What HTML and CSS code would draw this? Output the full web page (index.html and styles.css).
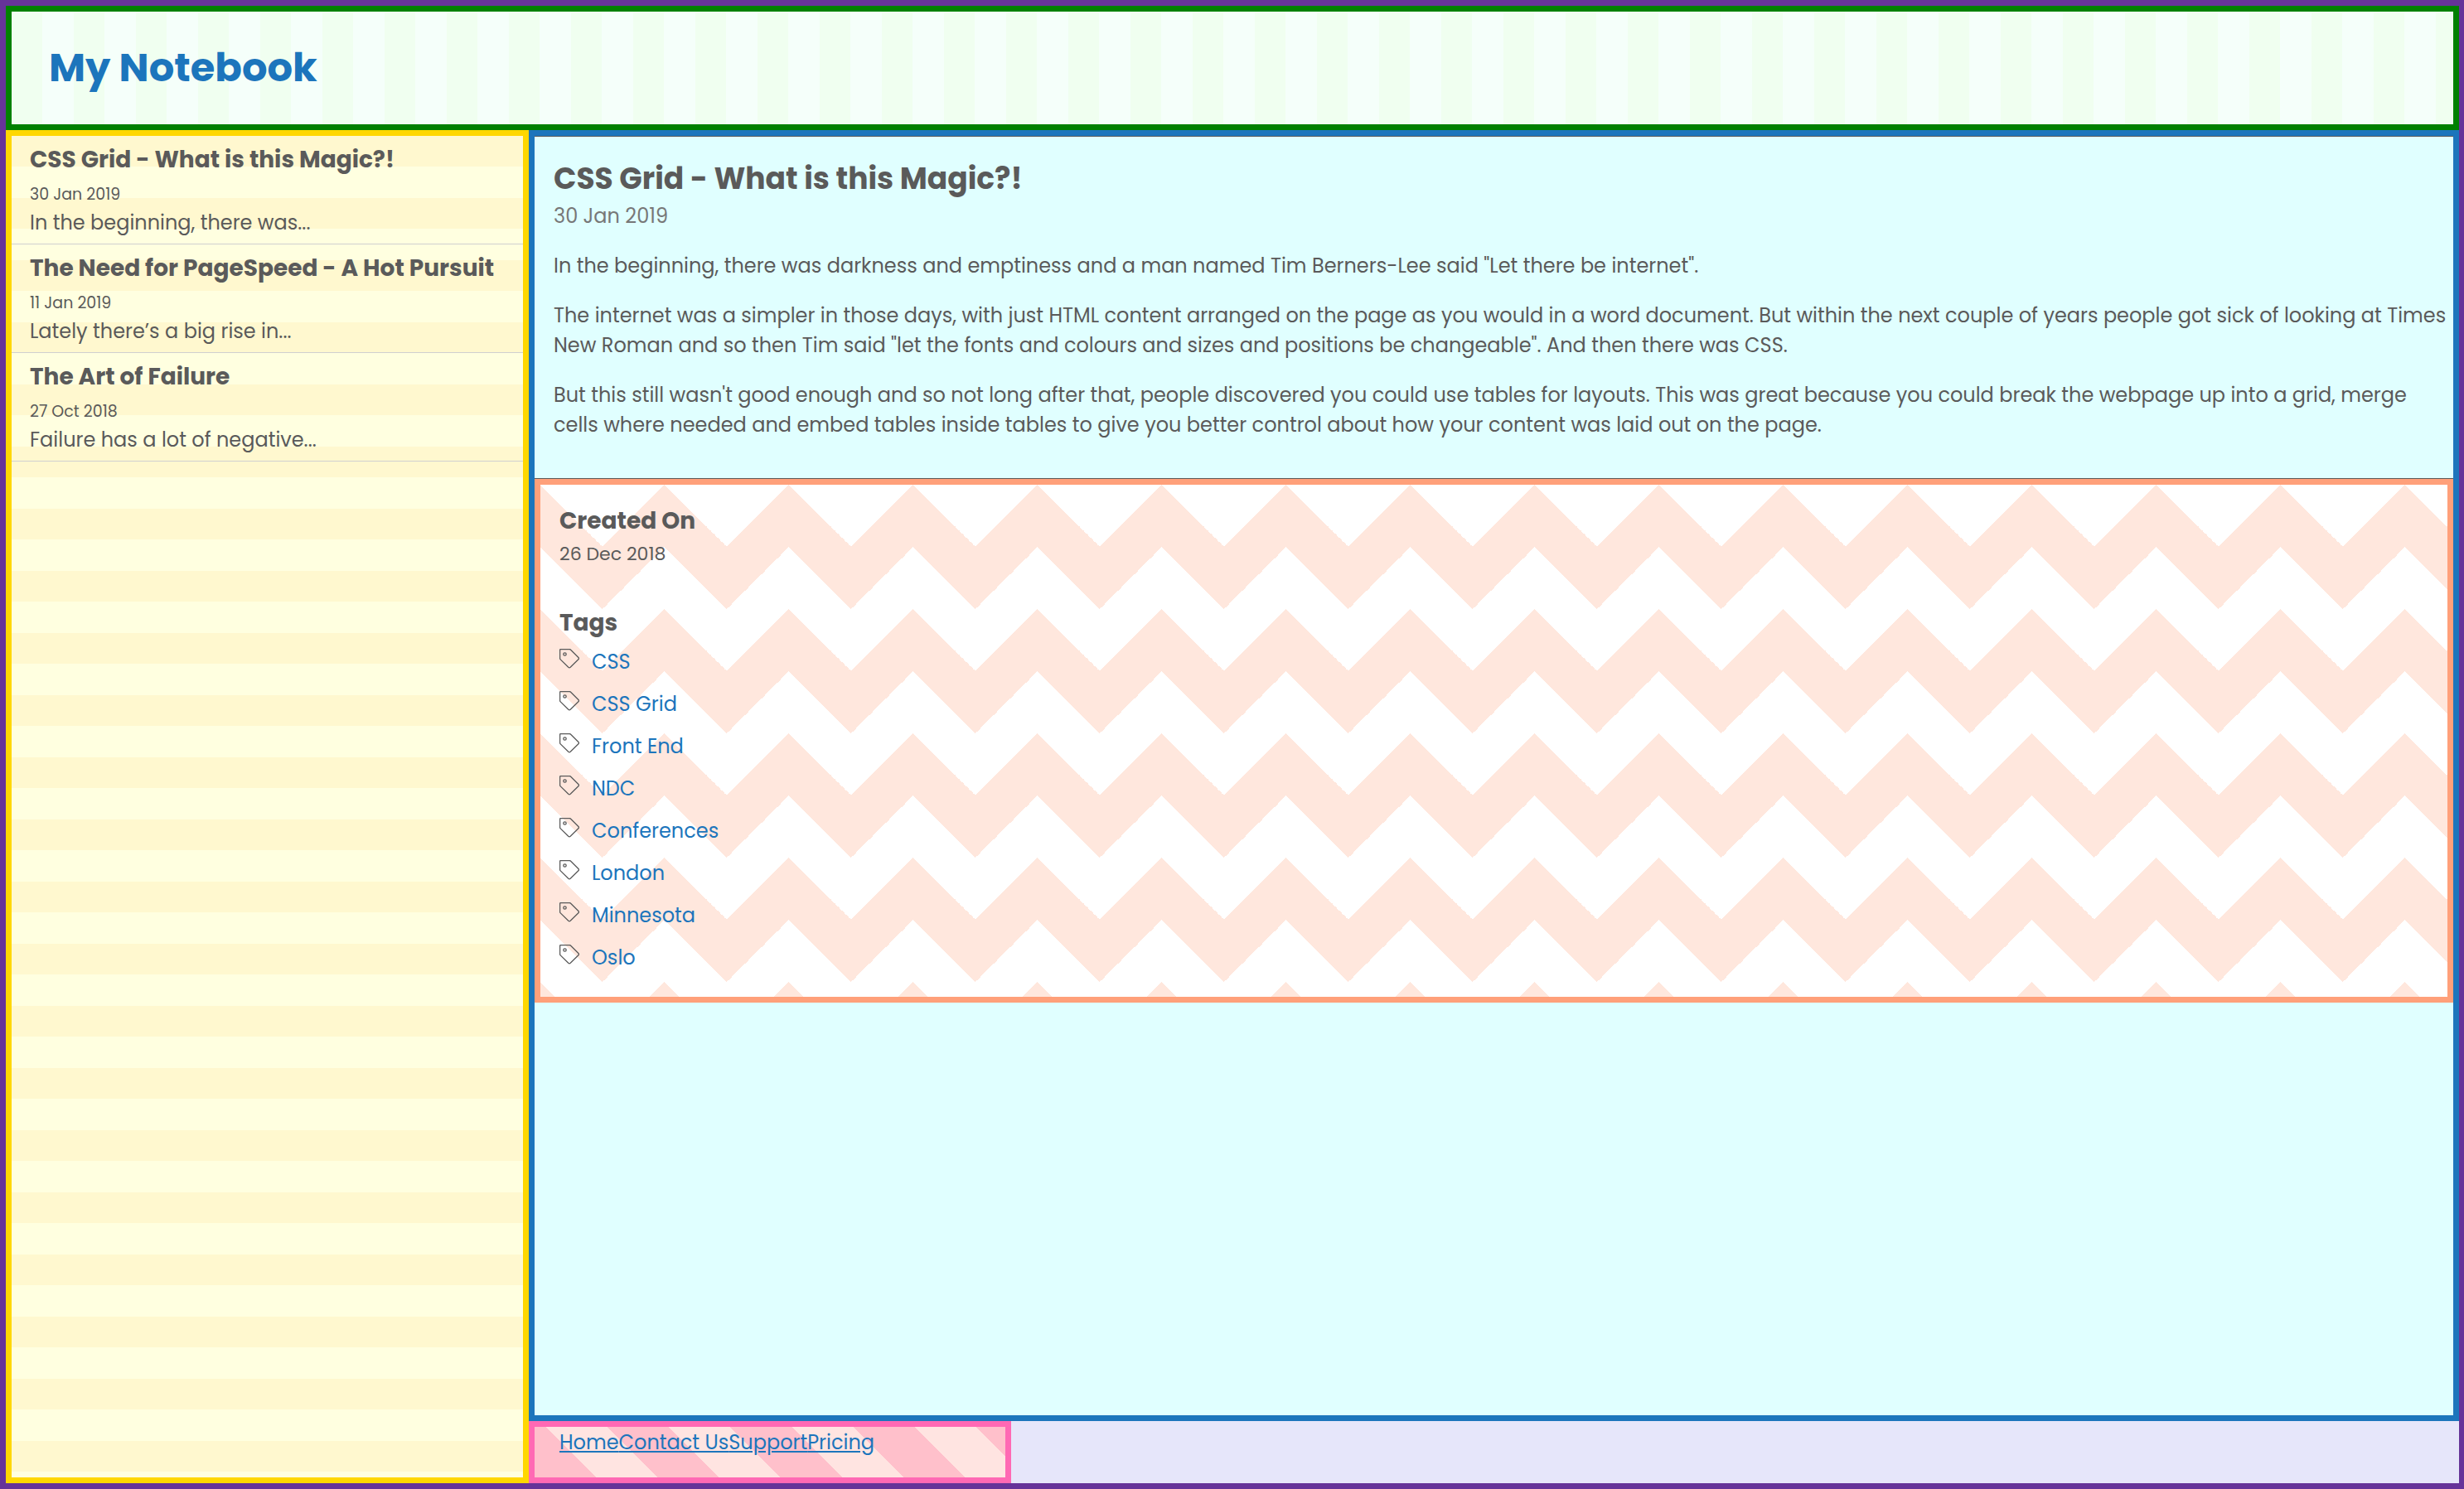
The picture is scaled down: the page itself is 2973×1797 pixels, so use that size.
FILE: index.html
```html
<!DOCTYPE html>
<html lang="en">
<head>
<meta charset="utf-8">
<meta name="viewport" content="width=device-width, initial-scale=1">
<title>My Notebook</title>
<link rel="stylesheet" href="styles.css">
</head>
<body>
<svg class="sprite" aria-hidden="true">
  <symbol id="tag" viewBox="0 0 24 24">
    <path d="M.6 1.600q0-1 1-1H12.200q.8 0 1.400.6L22.900 10.500q1.100 1.100 0 2.200L13.200 22.300q-1.200 1-2.400 0L1.200 12.900Q.6 12.300.6 11.300Z"/>
    <circle cx="6.500" cy="6.500" r="1.700"/>
  </symbol>
</svg>
<div class="page">
  <header class="header"><h1 class="logo">My Notebook</h1></header>

  <aside class="sidebar">
    <article class="note">
      <h2 class="heading">CSS Grid - What is this Magic?!</h2>
      <p class="note-date">30 Jan 2019</p>
      <p>In the beginning, there was...</p>
    </article>
    <article class="note">
      <h2 class="heading">The Need for PageSpeed - A Hot Pursuit</h2>
      <p class="note-date">11 Jan 2019</p>
      <p>Lately there’s a big rise in...</p>
    </article>
    <article class="note">
      <h2 class="heading">The Art of Failure</h2>
      <p class="note-date">27 Oct 2018</p>
      <p>Failure has a lot of negative...</p>
    </article>
  </aside>

  <main class="main">
    <article class="post">
      <h2 class="post-title">CSS Grid - What is this Magic?!</h2>
      <p class="post-date">30 Jan 2019</p>
      <p class="post-text">In the beginning, there was darkness and emptiness and a man named Tim Berners-Lee said "Let there be internet".</p>
      <p class="post-text">The internet was a simpler in those days, with just HTML content arranged on the page as you would in a word document. But within the next couple of years people got sick of looking at Times New Roman and so then Tim said "let the fonts and colours and sizes and positions be changeable". And then there was CSS.</p>
      <p class="post-text">But this still wasn't good enough and so not long after that, people discovered you could use tables for layouts. This was great because you could break the webpage up into a grid, merge cells where needed and embed tables inside tables to give you better control about how your content was laid out on the page.</p>
    </article>
    <section class="details">
      <h3 class="heading">Created On</h3>
      <p class="created">26 Dec 2018</p>
      <h3 class="heading">Tags</h3>
      <ul class="tags">
        <li class="tag"><svg class="icon" aria-hidden="true"><use href="#tag"/></svg><a href="#">CSS</a></li>
        <li class="tag"><svg class="icon" aria-hidden="true"><use href="#tag"/></svg><a href="#">CSS Grid</a></li>
        <li class="tag"><svg class="icon" aria-hidden="true"><use href="#tag"/></svg><a href="#">Front End</a></li>
        <li class="tag"><svg class="icon" aria-hidden="true"><use href="#tag"/></svg><a href="#">NDC</a></li>
        <li class="tag"><svg class="icon" aria-hidden="true"><use href="#tag"/></svg><a href="#">Conferences</a></li>
        <li class="tag"><svg class="icon" aria-hidden="true"><use href="#tag"/></svg><a href="#">London</a></li>
        <li class="tag"><svg class="icon" aria-hidden="true"><use href="#tag"/></svg><a href="#">Minnesota</a></li>
        <li class="tag"><svg class="icon" aria-hidden="true"><use href="#tag"/></svg><a href="#">Oslo</a></li>
      </ul>
    </section>
  </main>

  <footer class="footer">
    <nav class="links"><a href="#">Home</a><a href="#">Contact Us</a><a href="#">Support</a><a href="#">Pricing</a></nav>
  </footer>
</div>
</body>
</html>
```
FILE: styles.css
```css
* {
  box-sizing: border-box;
}

body,
h1,
h2,
h3,
p,
ul {
  margin: 0;
  padding: 0;
}

body {
  font-family: Poppins, Inter, sans-serif;
  font-size: 24px;
  line-height: 36px;
  color: #5a5a5a;
}

a {
  color: #1c75bc;
}

.sprite {
  display: none;
}

.page {
  display: grid;
  grid-template-columns: 631px 1fr 3fr;
  grid-template-rows: auto 1fr auto;
  min-height: 100vh;
  border: 7px solid #663399;
  border-right-width: 6px;
  background: #e6e6fa;
}

/* Header: vertical stripes */
.header {
  grid-column: 1 / -1;
  padding: 32px 45px;
  border: 7px solid #008000;
  background: linear-gradient(90deg, #f0fff0 50%, #f5fffa 50%) 0 0 / 75px 100%;
}

.logo {
  font-size: 48px;
  line-height: 72px;
  color: #1c75bc;
}

/* Sidebar: horizontal stripes */
.sidebar {
  grid-row: 2 / 4;
  border: 7px solid #ffd700;
  background: linear-gradient(#fff8cf 50%, #ffffe0 50%) 0 0 / 100% 75px;
}

.note {
  padding: 8px 22px 7px;
  border-bottom: 1px solid #d0d0d0;
}

.heading {
  font-size: 28px;
  line-height: 42px;
}

.note-date {
  margin: 6px 0 1px;
  font-size: 19px;
  line-height: 30px;
}

.main {
  grid-column: 2 / 4;
  border: 7px solid #1c75bc;
  background: #e0ffff;
}

.post {
  padding: 24px 4px 22px 23px;
  border: solid #5a5a5a;
  border-width: 1px 0;
}

.post-title {
  font-size: 36px;
  line-height: 54px;
}

.post-date {
  margin-bottom: 24px;
  color: #777;
}

.post-text {
  margin-bottom: 24px;
}

/* Details: zigzag bands */
.details {
  padding: 23px 23px 22px;
  border: 7px solid #ffa07a;
  background:
    conic-gradient(from 315deg at 50% 50%, #fff 90deg, transparent 0),
    linear-gradient(45deg, #fff 25%, transparent 25%),
    linear-gradient(315deg, #fff 25%, transparent 25%),
    #ffe7dd;
  background-size: 150px 150px;
}

.created {
  margin: 2px 0 45px;
  font-size: 22px;
  line-height: 34px;
}

.tags {
  list-style: none;
}

.tag {
  display: flex;
  align-items: center;
  gap: 15px;
  padding: 8px 0 7px;
}

.tag a {
  text-decoration: none;
}

.icon {
  width: 24px;
  height: 24px;
  margin-bottom: 8px;
  fill: none;
  stroke: #5a5a5a;
  stroke-width: 1.3;
}

/* Footer: diagonal stripes */
.footer {
  padding: 1px 30px 24px;
  border: 7px solid #ff69b4;
  background: repeating-linear-gradient(45deg, #ffc0cb 0 calc(105px / 2), #ffe4e1 calc(105px / 2) 105px);
}

.links {
  display: flex;
}
```
